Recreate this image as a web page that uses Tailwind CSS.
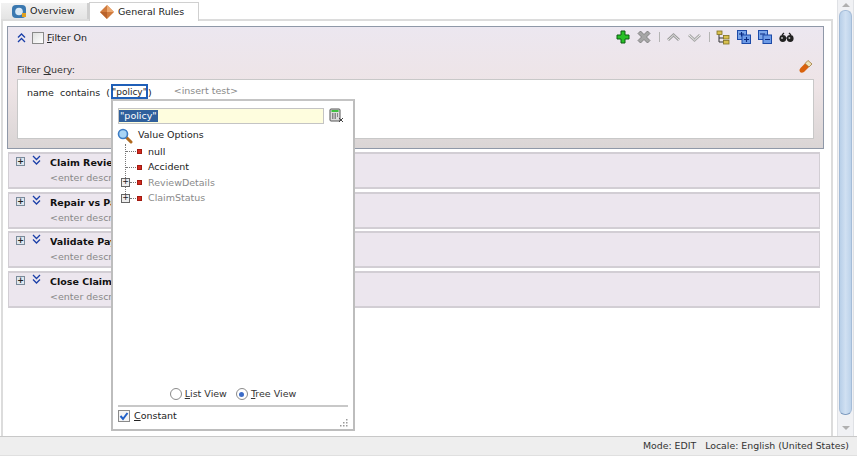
<!DOCTYPE html>
<html><head><meta charset="utf-8"><script src="https://cdn.jsdelivr.net/npm/@tailwindcss/browser@4"></script></head>
<body class="m-0">
<div class="relative w-[857px] h-[456px] overflow-hidden bg-white flex flex-col font-['DejaVu_Sans',sans-serif] text-[9.5px] text-[#222]">
  <div class="flex flex-1 min-h-0">
    <div class="w-[835px] flex flex-col">
      <div class="h-[19px] flex items-end pl-[1px]">
        <div class="w-[88px] h-[16px] bg-gradient-to-b from-[#f2f2f2] to-[#e4e4e4] border-r-2 border-[#cfcfcf] flex items-center pl-[10px] gap-[3px]">
          <svg width="16" height="15" viewBox="0 0 16 15"><rect x="1" y="1" width="14" height="13" rx="4" fill="#3a78b0"/><circle cx="8" cy="7.5" r="3.8" fill="#d8e8f5"/><rect x="11" y="9" width="4" height="4" fill="#e0a020"/></svg>
          <span>Overview</span>
        </div>
        <div class="w-[110px] h-[19px] bg-white border border-b-0 border-[#d0d0d0] flex items-center pl-[10px] gap-[4px] -mb-[2px] z-10">
          <svg width="14" height="14" viewBox="0 0 14 14"><path d="M7 0L14 7L7 14L0 7Z" fill="#d07a3c"/><path d="M7 0L14 7H7Z" fill="#eca870"/><path d="M0 7L7 14V7Z" fill="#b9622b"/></svg>
          <span>General Rules</span>
        </div>
      </div>
      <div class="flex-1 ml-[1px] mr-[2px] border-t-2 border-l-2 border-r-2 border-[#dcdcdc] pt-[5px] pl-[4px] pr-[7px]">
        <div class="h-[123px] border border-[#8f98a8] bg-gradient-to-b from-[#ece7f0] via-[#eee4e6] to-[#dad5d5] pt-[2px] pl-[9px] pr-[9px] flex flex-col">
          <div class="h-[18px] flex items-center relative">
            <svg width="9" height="10" viewBox="0 0 9 10" fill="none" stroke="#1a3fa8" stroke-width="1.3" class="mr-[6px]"><path d="M1 4.5L4.5 1L8 4.5M1 9L4.5 5.5L8 9"/></svg>
            <div class="w-[12px] h-[12px] border border-[#8a8a8a] bg-gradient-to-br from-[#e0e0e0] to-white mr-[3px]"></div>
            <span><span class="underline">F</span>ilter On</span>
            <div class="ml-auto flex items-center mr-[20px] -mt-[2px]">
              <svg class="w-[14px] h-[14px]" viewBox="0 0 14 14"><path d="M5 1H9V5H13V9H9V13H5V9H1V5H5Z" fill="#28c028" stroke="#0c5c12" stroke-width="1"/></svg>
              <svg class="w-[14px] h-[14px] ml-[7px]" viewBox="0 0 14 14"><path d="M1 3.5L3.5 1L7 4.5L10.5 1L13 3.5L9.5 7L13 10.5L10.5 13L7 9.5L3.5 13L1 10.5L4.5 7Z" fill="#a6a6a6" stroke="#727272" stroke-width=".8"/></svg>
              <div class="w-px h-[10px] bg-[#b4b4b4] ml-[8px]"></div>
              <svg class="w-[13px] h-[9px] ml-[7px]" viewBox="0 0 13 9" fill="none"><path d="M1 7L6.5 2L12 7" stroke="#9c9c9c" stroke-width="3"/><path d="M1 7L6.5 2L12 7" stroke="#e8e8e8" stroke-width="1"/></svg>
              <svg class="w-[13px] h-[9px] ml-[8px]" viewBox="0 0 13 9" fill="none"><path d="M1 2L6.5 7L12 2" stroke="#a8a8a8" stroke-width="3"/><path d="M1 2L6.5 7L12 2" stroke="#eeeeee" stroke-width="1"/></svg>
              <div class="w-px h-[10px] bg-[#b4b4b4] ml-[8px]"></div>
              <svg class="w-[14px] h-[15px] ml-[6px]" viewBox="0 0 14 15"><path d="M3 4V12H8M3 8H8" fill="none" stroke="#333"/><rect x="1" y="1" width="5" height="3.5" fill="#d8c050" stroke="#807020" stroke-width=".8"/><rect x="7.5" y="5.5" width="5.5" height="3.5" fill="#d8c050" stroke="#807020" stroke-width=".8"/><rect x="7.5" y="10.5" width="5.5" height="3.5" fill="#d8c050" stroke="#807020" stroke-width=".8"/></svg>
              <svg class="w-[14px] h-[14px] ml-[7px]" viewBox="0 0 14 14"><rect x=".5" y=".5" width="9" height="9" fill="#7aa5e8" stroke="#1c4aa8"/><rect x="5" y="5" width="8.5" height="8.5" fill="#6d9be6" stroke="#1c4aa8"/><path d="M2 4H7M4.5 2V6.5M7 9.5H12M9.5 7V12" stroke="#0a2a80" stroke-width="1.1"/></svg>
              <svg class="w-[14px] h-[14px] ml-[7px]" viewBox="0 0 14 14"><rect x=".5" y=".5" width="9" height="9" fill="#7aa5e8" stroke="#1c4aa8"/><rect x="5" y="5" width="8.5" height="8.5" fill="#6d9be6" stroke="#1c4aa8"/><path d="M2 4H7M7 9.5H12" stroke="#0a2a80" stroke-width="1.2"/></svg>
              <svg class="w-[15px] h-[11px] ml-[7px]" viewBox="0 0 15 11"><circle cx="3.8" cy="6.5" r="3.4" fill="#222"/><circle cx="11.2" cy="6.5" r="3.4" fill="#222"/><path d="M3 3L5 1M12 3L10 1M6 6H9" stroke="#222" fill="none" stroke-width="1.2"/><circle cx="3" cy="6" r="1" fill="#bbb"/><circle cx="10.4" cy="6" r="1" fill="#bbb"/></svg>
            </div>
          </div>
          <div class="h-[14px]"></div>
          <div class="h-[18px] flex items-center justify-between text-[#333]">
            <span>Filter <span class="underline">Q</span>uery:</span>
            <svg class="w-[15px] h-[15px] -mt-[8px] mr-[1px]" viewBox="0 0 15 15"><path d="M10 1.5L14 5L6 13Q3.5 14.5 2 13Q.5 11 2.5 9Z" fill="#d9620c"/><path d="M10 1.5L14 5L11 8L7 4.5Z" fill="#eee2b8" stroke="#8a7030" stroke-width=".6"/></svg>
          </div>
          <div class="h-[60px] bg-white border border-[#c8c8c8] pl-[9px] pt-[5px] flex items-start relative">
            <span class="leading-[14px] mt-[1px]">name&nbsp;&nbsp;contains&nbsp;&nbsp;(</span>
            <span class="w-[37px] h-[15px] ml-[1px] border-2 border-[#1f5fb8] leading-[12px] -mt-[1px] text-[9px] flex justify-center shrink-0">"policy"</span>
            <span class="leading-[14px] mt-[1px]">)</span>
            <span class="ml-[22px] leading-[12px] text-[#8a8a8a]">&lt;insert test&gt;</span>
          </div>
        </div>
        <div class="mt-[3px] ml-[1px] w-[812px] flex flex-col gap-[2.6px]">
          <div class="h-[37px] bg-[#ece6ee] border-y-2 border-x border-[#d2ced4] flex pl-[7px] pt-[1px]"><div class="w-[9px] h-[9px] mt-[2px] border border-[#7a8a9a] bg-[#dfe7ef] text-[8px] leading-[7px] text-center font-bold">+</div><svg width="9" height="10" viewBox="0 0 9 10" fill="none" stroke="#1a3fa8" stroke-width="1.3" class="ml-[7px]"><path d="M1 1L4.5 4.5L8 1M1 5.5L4.5 9L8 5.5"/></svg><div class="ml-[9px] w-[61px] overflow-hidden whitespace-nowrap"><div class="font-bold text-[#111] leading-[14px] mt-[1px]">Claim Review</div><div class="text-[#888] leading-[12px] mt-[2px]">&lt;enter description&gt;</div></div></div>
          <div class="h-[37px] bg-[#ece6ee] border-y-2 border-x border-[#d2ced4] flex pl-[7px] pt-[1px]"><div class="w-[9px] h-[9px] mt-[2px] border border-[#7a8a9a] bg-[#dfe7ef] text-[8px] leading-[7px] text-center font-bold">+</div><svg width="9" height="10" viewBox="0 0 9 10" fill="none" stroke="#1a3fa8" stroke-width="1.3" class="ml-[7px]"><path d="M1 1L4.5 4.5L8 1M1 5.5L4.5 9L8 5.5"/></svg><div class="ml-[9px] w-[61px] overflow-hidden whitespace-nowrap"><div class="font-bold text-[#111] leading-[14px] mt-[1px]">Repair vs Pay</div><div class="text-[#888] leading-[12px] mt-[2px]">&lt;enter description&gt;</div></div></div>
          <div class="h-[37px] bg-[#ece6ee] border-y-2 border-x border-[#d2ced4] flex pl-[7px] pt-[1px]"><div class="w-[9px] h-[9px] mt-[2px] border border-[#7a8a9a] bg-[#dfe7ef] text-[8px] leading-[7px] text-center font-bold">+</div><svg width="9" height="10" viewBox="0 0 9 10" fill="none" stroke="#1a3fa8" stroke-width="1.3" class="ml-[7px]"><path d="M1 1L4.5 4.5L8 1M1 5.5L4.5 9L8 5.5"/></svg><div class="ml-[9px] w-[61px] overflow-hidden whitespace-nowrap"><div class="font-bold text-[#111] leading-[14px] mt-[1px]">Validate Payment</div><div class="text-[#888] leading-[12px] mt-[2px]">&lt;enter description&gt;</div></div></div>
          <div class="h-[37px] bg-[#ece6ee] border-y-2 border-x border-[#d2ced4] flex pl-[7px] pt-[1px]"><div class="w-[9px] h-[9px] mt-[2px] border border-[#7a8a9a] bg-[#dfe7ef] text-[8px] leading-[7px] text-center font-bold">+</div><svg width="9" height="10" viewBox="0 0 9 10" fill="none" stroke="#1a3fa8" stroke-width="1.3" class="ml-[7px]"><path d="M1 1L4.5 4.5L8 1M1 5.5L4.5 9L8 5.5"/></svg><div class="ml-[9px] w-[61px] overflow-hidden whitespace-nowrap"><div class="font-bold text-[#111] leading-[14px] mt-[1px]">Close Claim</div><div class="text-[#888] leading-[12px] mt-[2px]">&lt;enter description&gt;</div></div></div>
        </div>
      </div>
    </div>
    <div class="w-[22px] flex">
      <div class="w-[17px] ml-[2px] bg-[#f0f1f4] border-x border-[#dfe1e5] flex flex-col items-center">
        <div class="h-[10px] flex items-center"><div class="border-x-[4px] border-x-transparent border-b-[4px] border-b-[#b0b0b0]"></div></div>
        <div class="w-[13px] flex-1 rounded-t-[6px] rounded-b-[6px] bg-gradient-to-r from-[#b8cfe8] via-[#d0e0f2] to-[#bcd2ea] border border-[#a4bcd8] border-b-[#7f9cc0]"></div>
        <div class="h-[21px] flex items-center pt-[5px]"><div class="border-x-[4px] border-x-transparent border-t-[4px] border-t-[#b0b0b0]"></div></div>
      </div>
    </div>
  </div>
  <div class="h-[20px] bg-[#eeeeee] border-t border-[#c8c8c8] border-b border-b-[#e0e0e0] flex items-center justify-end pr-[8px] text-[#333] text-[9.4px]">Mode: EDIT&nbsp;&nbsp;&nbsp;Locale: English (United States)</div>

  <div class="absolute left-[111px] top-[99px] w-[244px] h-[332px] bg-white border-2 border-[#bdbdbd] border-t-[#c4c4c4] flex flex-col px-[5px] pt-[6px]">
    <div class="flex items-center h-[17px]">
      <div class="w-[206px] h-[16px] bg-[#fefdde] border border-[#c4c4c4] flex items-center"><span class="bg-[#30609c] text-white leading-[12px] px-[1px]">"policy"</span></div>
      <svg class="ml-[5px]" width="15" height="15" viewBox="0 0 15 15"><rect x="1" y="1" width="10" height="12" rx="1" fill="#ddd" stroke="#555"/><rect x="2.5" y="2" width="7" height="2" fill="#3fbf3f"/><path d="M3 6h1.5M5.5 6H7M8 6H9M3 8h1.5M5.5 8H7M8 8H9M3 10h1.5M5.5 10H7" stroke="#333"/><path d="M10 10L14 14M14 10L10 14" stroke="#444"/></svg>
    </div>
    <div class="h-[19px] flex items-center mt-[2px] -ml-[1px]">
      <svg width="16" height="16" viewBox="0 0 16 16"><path d="M9 9L14 14" stroke="#b06a20" stroke-width="3" stroke-linecap="round"/><circle cx="6" cy="6" r="4.5" fill="#a8d4f5" stroke="#3c7cc4" stroke-width="1.6"/></svg>
      <span class="ml-[5px]">Value Options</span>
    </div>
    <div class="relative -mt-[1px]">
      <div class="absolute left-[7px] top-0 h-[54px] border-l border-dotted border-[#777]"></div>
      <div class="h-[15.5px] flex items-center pl-[8px]"><div class="w-[10px] border-t border-dotted border-[#777]"></div><div class="w-[5px] h-[5px] shrink-0 bg-[#d42a20] border border-[#a01a10] ml-[1px]"></div><span class="ml-[6px] leading-[12px]">null</span></div>
      <div class="h-[15.5px] flex items-center pl-[8px]"><div class="w-[10px] border-t border-dotted border-[#777]"></div><div class="w-[5px] h-[5px] shrink-0 bg-[#d42a20] border border-[#a01a10] ml-[1px]"></div><span class="ml-[6px] leading-[12px]">Accident</span></div>
      <div class="h-[15.5px] flex items-center pl-[3px] text-[#8a8a8a]"><div class="w-[9px] h-[9px] border border-[#666] bg-[#eee] text-[#222] text-[8px] leading-[6px] text-center z-10">+</div><div class="w-[6px] border-t border-dotted border-[#777]"></div><div class="w-[5px] h-[5px] shrink-0 bg-[#d42a20] border border-[#a01a10] ml-[1px]"></div><span class="ml-[6px] leading-[12px]">ReviewDetails</span></div>
      <div class="h-[15.5px] flex items-center pl-[3px] text-[#8a8a8a]"><div class="w-[9px] h-[9px] border border-[#666] bg-[#eee] text-[#222] text-[8px] leading-[6px] text-center z-10">+</div><div class="w-[6px] border-t border-dotted border-[#777]"></div><div class="w-[5px] h-[5px] shrink-0 bg-[#d42a20] border border-[#a01a10] ml-[1px]"></div><span class="ml-[6px] leading-[12px]">ClaimStatus</span></div>
    </div>
    <div class="flex-1"></div>
    <div class="h-[18px] flex items-center justify-center gap-[9px] mb-[2px] text-[#333]">
      <label class="flex items-center gap-[3px]"><span class="w-[12px] h-[12px] rounded-full border border-[#8a8a8a] bg-white"></span><span><span class="underline">L</span>ist View</span></label>
      <label class="flex items-center gap-[3px]"><span class="w-[12px] h-[12px] rounded-full border border-[#8a8a8a] bg-white flex items-center justify-center"><span class="w-[5px] h-[5px] rounded-full bg-[#3c6cc8]"></span></span><span><span class="underline">T</span>ree View</span></label>
    </div>
    <div class="border-t-2 border-[#c8c8c8] h-[24px] pb-[4px] flex items-center relative">
      <span class="w-[12px] h-[12px] border border-[#8a8a8a] bg-[#f4f4f4] flex items-center justify-center"><svg width="10" height="10" viewBox="0 0 10 10" fill="none"><path d="M1.5 5L4 8L8.5 2" stroke="#1f5fc8" stroke-width="2"/></svg></span>
      <span class="ml-[4px]"><span class="underline">C</span>onstant</span>
      <svg class="absolute right-[-1px] bottom-[1px]" width="10" height="10" viewBox="0 0 10 10" fill="#9a9a9a"><rect x="7" y="1" width="1.5" height="1.5"/><rect x="4" y="4" width="1.5" height="1.5"/><rect x="7" y="4" width="1.5" height="1.5"/><rect x="1" y="7" width="1.5" height="1.5"/><rect x="4" y="7" width="1.5" height="1.5"/><rect x="7" y="7" width="1.5" height="1.5"/></svg>
    </div>
  </div>
</div>
</body></html>
